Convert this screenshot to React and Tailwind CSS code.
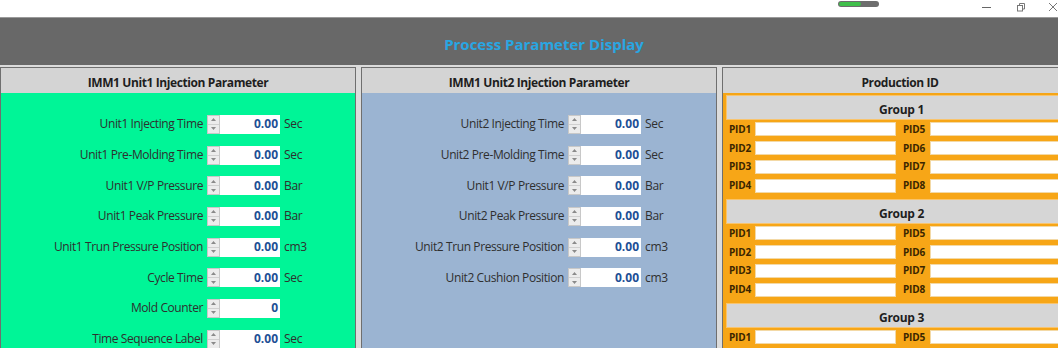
import React from "react";

const font = { fontFamily: '"Open Sans", "Noto Sans", "Liberation Sans", sans-serif' };

function Spinner() {
  return (
    <div className="flex h-[19px] w-[13px] flex-col border border-[#c8c8c8] bg-[#ececec]">
      <div className="flex flex-1 items-center justify-center border-b border-[#d0d0d0]">
        <svg width="5" height="3" viewBox="0 0 5 3"><path d="M0 3 L2.5 0 L5 3 Z" fill="#8a8a8a" /></svg>
      </div>
      <div className="flex flex-1 items-center justify-center">
        <svg width="5" height="3" viewBox="0 0 5 3"><path d="M0 0 L2.5 3 L5 0 Z" fill="#8a8a8a" /></svg>
      </div>
    </div>
  );
}

function ParamRow({ label, value, unit }) {
  return (
    <div className="flex h-[30.7px] items-center">
      <div className="w-[206px] pr-[4px] text-right text-[12px] tracking-[-0.4px] text-[#2f2f2f]">{label}</div>
      <Spinner />
      <div className="flex h-[19px] w-[60px] items-center justify-end bg-white pr-[2px] text-[12px] font-bold text-[#1d4f95]">
        {value}
      </div>
      <div className="pl-[4px] text-[12px] tracking-[-0.3px] text-[#2f2f2f]">{unit}</div>
    </div>
  );
}

function Panel({ title, bg, children }) {
  return (
    <div className="flex h-[290px] w-[356px] shrink-0 flex-col border border-[#6f6f6f]">
      <div className="flex h-[25px] shrink-0 items-center justify-center bg-[#d4d4d4] pt-[4px] text-[12px] font-bold tracking-[-0.4px] text-[#1e1e1e]">
        {title}
      </div>
      <div className={`flex-1 pt-[16px] ${bg}`}>{children}</div>
    </div>
  );
}

function PidRow({ a, b }) {
  return (
    <div className="flex h-[18.75px] items-center pl-[3px]">
      <div className="w-[26px] text-[10px] font-bold tracking-[-0.2px] text-[#3a2500]">{a}</div>
      <div className="h-[14px] w-[141px] border border-[#f3d9a6] bg-white" />
      <div className="w-[7px]" />
      <div className="w-[27px] text-[10px] font-bold tracking-[-0.2px] text-[#3a2500]">{b}</div>
      <div className="h-[14px] w-[140px] border border-[#f3d9a6] bg-white" />
    </div>
  );
}

function Group({ name, rows }) {
  return (
    <div className="mb-[4px]">
      <div className="flex h-[25px] items-center justify-center border border-[#f8c46e] bg-[#d6d6d6] pt-[4px] text-[12px] font-bold tracking-[-0.3px] text-[#1e1e1e]">
        {name}
      </div>
      {rows.map((r) => (
        <PidRow key={r[0]} a={r[0]} b={r[1]} />
      ))}
    </div>
  );
}

export default function App() {
  const rows4 = [["PID1", "PID5"], ["PID2", "PID6"], ["PID3", "PID7"], ["PID4", "PID8"]];
  return (
    <div className="h-[348px] w-[1058px] overflow-hidden bg-[#dcdcdc]" style={font}>
      {/* window title strip */}
      <div className="flex h-[17px] items-start bg-white">
        <div className="ml-[838px] mt-[1px] flex h-[6px] w-[46px] overflow-hidden rounded-full bg-[#6d6d6d]">
          <div className="m-[1px] w-[22px] rounded-full bg-[#3fbf4a]" />
        </div>
        <div className="ml-[103px] mt-[2px]">
          <svg width="10" height="10" viewBox="0 0 10 10"><path d="M0 5.5 H9" stroke="#666" strokeWidth="1" /></svg>
        </div>
        <div className="ml-[24px] mt-[2px]">
          <svg width="10" height="10" viewBox="0 0 10 10" fill="none" stroke="#777" strokeWidth="1">
            <rect x="1.5" y="3.5" width="5" height="5.5" />
            <path d="M3.5 3.5 V1.5 H8.5 V7 H6.5" />
          </svg>
        </div>
        <div className="ml-[22px] mt-[2px]">
          <svg width="10" height="10" viewBox="0 0 10 10" stroke="#777" strokeWidth="1"><path d="M1 1 L9 9 M9 1 L1 9" /></svg>
        </div>
      </div>
      <div className="h-[1px] bg-[#9a9a9a]" />
      {/* header band */}
      <div className="flex h-[47px] items-center justify-center bg-[#686868] pl-[30px] pt-[6px]">
        <span className="text-[15px] font-bold text-[#29a6e2]">Process Parameter Display</span>
      </div>
      {/* panels */}
      <div className="flex gap-[5px] pt-[2px]">
        <Panel title="IMM1 Unit1 Injection Parameter" bg="bg-[#00f597]">
          <ParamRow label="Unit1 Injecting Time" value="0.00" unit="Sec" />
          <ParamRow label="Unit1 Pre-Molding Time" value="0.00" unit="Sec" />
          <ParamRow label="Unit1 V/P Pressure" value="0.00" unit="Bar" />
          <ParamRow label="Unit1 Peak Pressure" value="0.00" unit="Bar" />
          <ParamRow label="Unit1 Trun Pressure Position" value="0.00" unit="cm3" />
          <ParamRow label="Cycle Time" value="0.00" unit="Sec" />
          <ParamRow label="Mold Counter" value="0" unit="" />
          <ParamRow label="Time Sequence Label" value="0.00" unit="Sec" />
        </Panel>
        <Panel title="IMM1 Unit2 Injection Parameter" bg="bg-[#9bb4d2]">
          <ParamRow label="Unit2 Injecting Time" value="0.00" unit="Sec" />
          <ParamRow label="Unit2 Pre-Molding Time" value="0.00" unit="Sec" />
          <ParamRow label="Unit1 V/P Pressure" value="0.00" unit="Bar" />
          <ParamRow label="Unit2 Peak Pressure" value="0.00" unit="Bar" />
          <ParamRow label="Unit2 Trun Pressure Position" value="0.00" unit="cm3" />
          <ParamRow label="Unit2 Cushion Position" value="0.00" unit="cm3" />
        </Panel>
        <div className="flex h-[290px] w-[356px] shrink-0 flex-col border border-[#6f6f6f]">
          <div className="flex h-[25px] shrink-0 items-center justify-center bg-[#d4d4d4] pt-[4px] text-[12px] font-bold tracking-[-0.4px] text-[#1e1e1e]">
            Production ID
          </div>
          <div className="flex-1 border-l-[2px] border-t-[2px] border-[#f5a516] bg-[#f7a617] pl-[1px]">
            <Group name="Group 1" rows={rows4} />
            <Group name="Group 2" rows={rows4} />
            <Group name="Group 3" rows={rows4} />
          </div>
        </div>
      </div>
    </div>
  );
}
